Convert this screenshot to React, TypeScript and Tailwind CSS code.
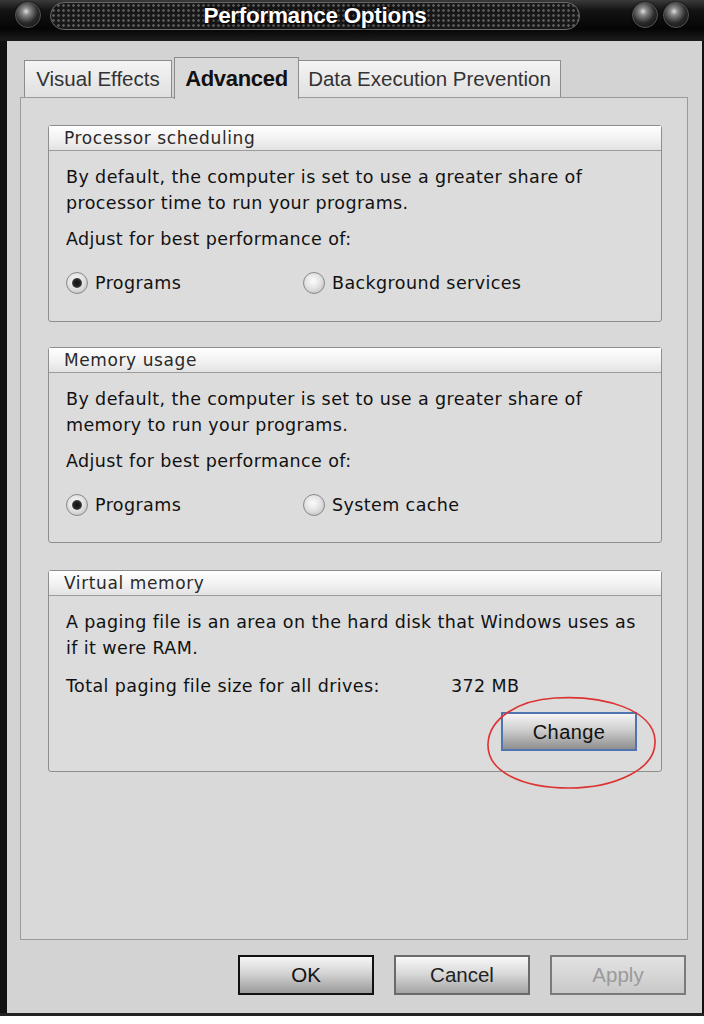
import React from 'react';

const body = "font-['DejaVu_Sans',sans-serif] text-[17.5px] tracking-[0.4px] text-[#111]";
const arial = "font-['Liberation_Sans',Arial,sans-serif]";

function Orb() {
  return (
    <div className="w-[26px] h-[26px] rounded-full border border-[#555] bg-[radial-gradient(circle_at_42%_35%,#e0e0e0_0,#8a8a8a_18%,#2a2a2a_55%,#0a0a0a_100%)] shadow-[0_0_2px_#000]" />
  );
}

function Radio({ checked, label, className = '' }: { checked?: boolean; label: string; className?: string }) {
  return (
    <div className={`flex items-center ${className}`}>
      <div className="w-[22px] h-[22px] rounded-full border border-[#8a8a8a] bg-[radial-gradient(circle_at_45%_40%,#fbfbfb_0,#e4e4e4_45%,#b4b4b4_100%)] flex items-center justify-center">
        {checked && (
          <div className="w-[10px] h-[10px] rounded-full bg-[radial-gradient(circle,#111_0,#222_45%,#777_100%)]" />
        )}
      </div>
      <span className="ml-[7px]">{label}</span>
    </div>
  );
}

function Group({ title, className = '', children }: { title: string; className?: string; children: React.ReactNode }) {
  return (
    <div className={`border border-[#8e8e8e] rounded-[3px] bg-[#dcdcdc] flex flex-col ${className}`}>
      <div className="h-[25px] flex-none bg-[linear-gradient(to_bottom,#ffffff,#f0f0f0_60%,#e2e2e2)] border-b border-[#9c9c9c] pl-[15px] text-[17px] tracking-[0.6px] leading-[24px] text-[#2a2a2a]">
        {title}
      </div>
      <div className="flex-1 flex flex-col pl-[17px] pr-[10px]">{children}</div>
    </div>
  );
}

function Btn({ label, kind }: { label: string; kind: 'ok' | 'cancel' | 'apply' }) {
  const styles = {
    ok: 'border-2 border-[#111] bg-[linear-gradient(to_bottom,#f6f6f6,#d4d4d4_45%,#9a9a9a)] text-[#111]',
    cancel: 'border-2 border-[#6a6a6a] bg-[linear-gradient(to_bottom,#f8f8f8,#dadada_45%,#a4a4a4)] text-[#222]',
    apply: 'border-2 border-[#7a7a7a] bg-[linear-gradient(to_bottom,#e2e2e2,#d6d6d6_50%,#c8c8c8)] text-[#9a9a9a]',
  }[kind];
  return (
    <div className={`w-[136px] h-[40px] flex items-center justify-center ${arial} text-[20.5px] ${styles}`}>
      {label}
    </div>
  );
}

export default function App() {
  return (
    <div className="w-[704px] h-[1024px] bg-white overflow-hidden">
      <div className="h-[1016px] flex flex-col bg-[#111] border-b-[3px] border-[#222]">
        {/* title bar */}
        <div className="h-[41px] flex-none flex items-start pt-[2px] pl-[15px] bg-[linear-gradient(to_bottom,#3a3a3a,#141414_25%,#050505_70%,#1c1c1c)]">
          <Orb />
          <div className="ml-[9px] w-[530px] h-[28px] rounded-full border border-[#6a6a6a] bg-[#181818] bg-[radial-gradient(circle,#5a5a5a_1px,transparent_1.6px)] bg-[length:5px_5px] flex items-center justify-center">
            <span className={`${arial} font-bold text-[22.5px] text-white tracking-[-0.3px] [text-shadow:0_0_3px_#000,0_0_6px_#000]`}>
              Performance Options
            </span>
          </div>
          <div className="ml-[52px]">
            <Orb />
          </div>
          <div className="ml-[5px]">
            <Orb />
          </div>
        </div>

        {/* window body */}
        <div className="flex-1 ml-[7px] mr-[2px] bg-[#d3d3d3] flex flex-col pt-[16px]">
          {/* tabs */}
          <div className={`flex items-end ml-[17px] h-[40px] ${arial} text-[20.5px] text-[#333]`}>
            <div className="w-[148px] h-[37px] border border-[#8c8c8c] border-b-0 bg-[linear-gradient(to_bottom,#f4f4f4,#e0e0e0)] flex items-center justify-center">
              Visual Effects
            </div>
            <div className="relative z-10 w-[125px] h-[42px] -mb-[2px] ml-[2px] border border-[#8c8c8c] border-b-0 bg-[#d9d9d9] flex items-start pt-[4px] justify-center font-bold text-[22px] text-[#111] tracking-[-0.3px]">
              Advanced
            </div>
            <div className="w-[262px] h-[37px] border border-[#8c8c8c] border-b-0 border-l-0 bg-[linear-gradient(to_bottom,#f4f4f4,#e0e0e0)] flex items-center justify-center">
              Data Execution Prevention
            </div>
          </div>

          {/* panel */}
          <div className={`h-[843px] ml-[13px] mr-[14px] border border-[#9a9a9a] bg-[#d9d9d9] flex flex-col pt-[27px] pl-[27px] pr-[25px] ${body}`}>
            <Group title="Processor scheduling" className="h-[197px]">
              <p className="mt-[13px] leading-[26px]">
                By default, the computer is set to use a greater share of
                <br />
                processor time to run your programs.
              </p>
              <p className="mt-[10px] leading-[26px]">Adjust for best performance of:</p>
              <div className="mt-[18px] flex">
                <Radio checked label="Programs" className="w-[237px]" />
                <Radio label="Background services" />
              </div>
            </Group>

            <Group title="Memory usage" className="h-[196px] mt-[25px]">
              <p className="mt-[13px] leading-[26px]">
                By default, the computer is set to use a greater share of
                <br />
                memory to run your programs.
              </p>
              <p className="mt-[10px] leading-[26px]">Adjust for best performance of:</p>
              <div className="mt-[18px] flex">
                <Radio checked label="Programs" className="w-[237px]" />
                <Radio label="System cache" />
              </div>
            </Group>

            <Group title="Virtual memory" className="h-[202px] mt-[27px]">
              <p className="mt-[13px] leading-[26px] whitespace-nowrap">
                A paging file is an area on the hard disk that Windows uses as
                <br />
                if it were RAM.
              </p>
              <div className="mt-[12px] flex leading-[26px]">
                <span className="w-[385px]">Total paging file size for all drives:</span>
                <span>372 MB</span>
              </div>
              <div className="mt-[13px] flex justify-end pr-[14px]">
                <div className="relative">
                  <div className={`w-[136px] h-[39px] border-2 border-[#4f74b0] bg-[linear-gradient(to_bottom,#f4f4f4,#cfcfcf_45%,#8e8e8e)] flex items-center justify-center ${arial} text-[20px] text-[#111]`}>
                    Change
                  </div>
                  <svg
                    className="absolute left-[-16px] top-[-16px] pointer-events-none"
                    width="172"
                    height="94"
                    viewBox="0 0 172 94"
                  >
                    <path
                      d="M70 2 C 120 -1 168 14 170 44 C 172 74 128 92 84 92 C 38 92 2 76 3 48 C 4 22 34 4 70 2 Z"
                      fill="none"
                      stroke="#d33"
                      strokeWidth="1.6"
                    />
                  </svg>
                </div>
              </div>
            </Group>
          </div>

          {/* buttons */}
          <div className="mt-[15px] flex justify-end gap-[20px] mr-[16px]">
            <Btn label="OK" kind="ok" />
            <Btn label="Cancel" kind="cancel" />
            <Btn label="Apply" kind="apply" />
          </div>
        </div>
      </div>
    </div>
  );
}
